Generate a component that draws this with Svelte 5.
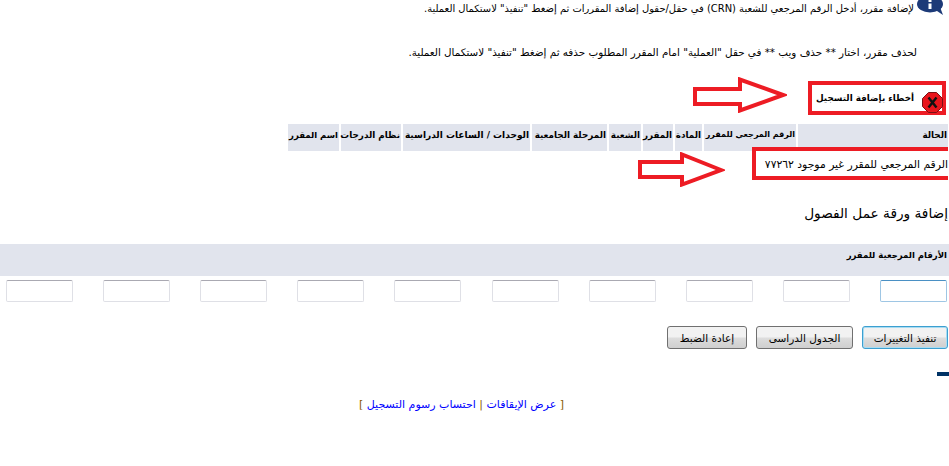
<script>
  const headers = [
    { label: 'الحالة', width: 150, size: 8.8 },
    { label: 'الرقم المرجعي للمقرر', width: 92, size: 8 },
    { label: 'المادة', width: 27, size: 8.8 },
    { label: 'المقرر', width: 30, size: 8.8 },
    { label: 'الشعبة', width: 32, size: 8.8 },
    { label: 'المرحلة الجامعية', width: 75, size: 8.8 },
    { label: 'الوحدات / الساعات الدراسية', width: 127, size: 9 },
    { label: 'نظام الدرجات', width: 60, size: 8.8 },
    { label: 'اسم المقرر', width: 51, size: 8.5 }
  ]
  const inputs = Array.from({ length: 10 }, (_, i) => i)
</script>

<div class="page" dir="rtl">
  <div class="notes">
    <svg class="info" width="30" height="16" viewBox="0 0 30 16">
      <ellipse cx="14" cy="4" rx="13" ry="8.5" fill="#1c3a78" />
      <path d="M18 9 L27 15 L24 7 Z" fill="#1c3a78" />
      <rect x="12.5" y="0" width="3" height="2" fill="#fff" />
      <rect x="12.5" y="3.5" width="3" height="5.5" fill="#fff" />
    </svg>
    <p class="first">لإضافة مقرر، أدخل الرقم المرجعي للشعبة (CRN) في حقل/حقول إضافة المقررات ثم إضغط "تنفيذ" لاستكمال العملية.</p>
    <p class="second">لحذف مقرر، اختار ** حذف ويب ** في حقل "العملية" امام المقرر المطلوب حذفه ثم إضغط "تنفيذ" لاستكمال العملية.</p>
  </div>

  <div class="errors">
    <div class="error-title">
      <svg class="stop" width="21" height="21" viewBox="0 0 21 21">
        <path d="M6.5 0.5 H14.5 L20.5 6.5 V14.5 L14.5 20.5 H6.5 L0.5 14.5 V6.5 Z" fill="#e8151c" stroke="#7a1014" />
        <path d="M6.5 5.5 L14.5 15.5 M14.5 5.5 L6.5 15.5" stroke="#111" stroke-width="2.4" fill="none" />
      </svg>
      <strong>أخطاء بإضافة التسجيل</strong>
    </div>
    <svg class="arrow" width="94" height="36" viewBox="0 0 94 36">
      <path d="M90 18 L47 2.5 L47 12 L2 12 L2 27 L47 27 L47 33.5 Z" fill="#fff" stroke="#ed1c24" stroke-width="4" />
    </svg>
  </div>

  <div class="grid">
    {#each headers as h}
      <div class="th" style="width: {h.width}px; font-size: {h.size}px">{h.label}</div>
    {/each}
  </div>

  <div class="status">
    <div class="message">الرقم المرجعي للمقرر غير موجود ٧٧٢٦٢</div>
    <svg class="arrow lower" width="87" height="35" viewBox="0 0 87 35">
      <path d="M83 18 L44 2.5 L44 10 L2 10 L2 25 L44 25 L44 32.5 Z" fill="#fff" stroke="#ed1c24" stroke-width="4" />
    </svg>
  </div>

  <h2>إضافة ورقة عمل الفصول</h2>

  <div class="band"><strong>الأرقام المرجعية للمقرر</strong></div>

  <div class="inputs">
    {#each inputs as i}
      <input class:focused={i === 0} type="text" />
    {/each}
  </div>

  <div class="buttons">
    <button class="primary">تنفيذ التغييرات</button>
    <button class="schedule">الجدول الدراسى</button>
    <button class="reset">إعادة الضبط</button>
  </div>

  <div class="dash"></div>

  <div class="links">
    <span>[</span> <a href="#a">عرض الإيقافات</a> <span>|</span> <a href="#b">احتساب رسوم التسجيل</a> <span>]</span>
  </div>
</div>

<style>
  :global(body) {
    margin: 0;
    background: #fff;
  }

  .page {
    width: 949px;
    height: 466px;
    overflow: hidden;
    font-family: "DejaVu Sans", sans-serif;
    font-size: 11px;
    color: #000;
  }

  .notes {
    position: relative;
    height: 77px;
    padding-right: 35px;
  }

  .notes p {
    margin: 0;
    line-height: 16px;
  }

  .notes .first {
    padding-top: 1px;
    font-size: 9.95px;
  }

  .notes .second {
    padding-top: 27px;
    margin-right: -3px;
    font-size: 10.35px;
  }

  .info {
    position: absolute;
    top: 0;
    right: 3px;
  }

  .errors {
    display: flex;
    align-items: flex-start;
    height: 47px;
    padding-right: 3px;
    gap: 21px;
  }

  .error-title {
    display: flex;
    align-items: flex-start;
    box-sizing: border-box;
    width: 138px;
    height: 34px;
    margin-top: 4px;
    padding: 5px 0 0 0;
    border: 4px solid #ed1c24;
    gap: 8px;
  }

  .error-title strong {
    font-size: 8.8px;
    line-height: 16px;
    white-space: nowrap;
  }

  .stop {
    flex: none;
    margin: 2px -1px -8px 0;
  }

  .grid {
    display: flex;
    gap: 2px;
    padding-right: 1px;
  }

  .th {
    flex: none;
    box-sizing: border-box;
    height: 27px;
    padding: 4px 1px 0 0;
    background: #e1e4ed;
    font-weight: bold;
    line-height: 14px;
    white-space: nowrap;
  }

  .status {
    display: flex;
    align-items: flex-start;
    gap: 27px;
    height: 40px;
    margin-top: -4px;
    padding-right: 1px;
    position: relative;
  }

  .message {
    box-sizing: border-box;
    width: 196px;
    height: 33px;
    border: 4px solid #ed1c24;
    border-right-width: 0;
    background: #fff;
    font-size: 10.8px;
    line-height: 28px;
    white-space: nowrap;
  }

  .arrow.lower {
    margin-top: 5px;
  }

  h2 {
    margin: 17px 1px 0 0;
    font-size: 13.7px;
    font-weight: normal;
    line-height: 18px;
  }

  .band {
    box-sizing: border-box;
    height: 32px;
    margin-top: 22px;
    padding: 4px 2px 0 0;
    background: #e1e4ed;
    font-size: 8.5px;
    line-height: 14px;
  }

  .inputs {
    display: flex;
    justify-content: space-between;
    margin-top: 4px;
    padding: 0 2px 0 6px;
  }

  input {
    box-sizing: border-box;
    width: 67px;
    height: 22px;
    padding: 0;
    border: 1px solid #dfe0e6;
    border-top-color: #aaa9b2;
    border-radius: 2px;
    background: #fff;
  }

  input.focused {
    border-color: #9ec6e4;
    border-top-color: #4a90c4;
  }

  .buttons {
    display: flex;
    gap: 9px;
    margin-top: 24px;
    padding-right: 1px;
  }

  button {
    box-sizing: border-box;
    height: 23px;
    padding: 0;
    border: 1px solid #707070;
    border-radius: 3px;
    background: linear-gradient(#f2f2f2 0 45%, #dcdcdc 55%, #cfcfcf);
    font-family: inherit;
    font-size: 10.5px;
    color: #000;
  }

  .primary {
    width: 86px;
    border-color: #3c9fd0;
    box-shadow: inset 0 0 0 1px #a8dcf2;
  }

  .schedule {
    width: 97px;
  }

  .reset {
    width: 80px;
  }

  .dash {
    width: 12px;
    height: 4px;
    margin-top: 23px;
    background: #003366;
  }

  .links {
    margin-top: 21px;
    padding-right: 26px;
    text-align: center;
    font-size: 11px;
    line-height: 16px;
    color: #8a5a00;
  }

  .links a {
    color: #0000ff;
    text-decoration: none;
  }
</style>
